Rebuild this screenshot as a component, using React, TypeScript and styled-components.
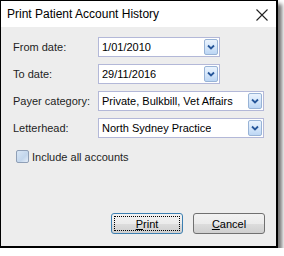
import styled, { createGlobalStyle } from 'styled-components';

const GlobalStyle = createGlobalStyle`
  html, body {
    margin: 0;
    padding: 0;
    background: #ffffff;
  }
  body {
    font-family: 'Liberation Sans', Arial, sans-serif;
    font-size: 11px;
    color: #000;
  }
`;

const Window = styled.div`
  width: 275px;
  height: 245px;
  border: 1px solid #000;
  border-right-width: 2px;
  border-bottom-width: 2px;
  box-shadow: 4px 4px 4px rgba(0, 0, 0, 0.55);
  display: flex;
  flex-direction: column;
  background: #ededed;
`;

const TitleBar = styled.div`
  height: 26px;
  background: #fff;
  display: flex;
  align-items: center;
  justify-content: space-between;
  padding: 0 8px 0 6px;
`;

const TitleText = styled.div`
  font-family: 'Liberation Sans', Arial, sans-serif;
  font-size: 12px;
  color: #000;
`;

const CloseIcon = styled.svg`
  display: block;
  margin-top: 1px;
`;

const Body = styled.div`
  flex: 1;
  display: flex;
  flex-direction: column;
  padding: 10px 11px 12px 12px;
`;

const FormGrid = styled.div`
  display: grid;
  grid-template-columns: 85px 1fr;
  row-gap: 7px;
  align-items: center;
`;

const Label = styled.label`
  font-size: 11px;
  color: #1e1e1e;
`;

const Combo = styled.div<{ $wide?: boolean }>`
  width: ${({ $wide }) => ($wide ? '166px' : '122px')};
  height: 20px;
  box-sizing: border-box;
  border: 1px solid #b3b8d8;
  background: #fff;
  display: flex;
  align-items: center;
  justify-content: space-between;
  padding: 0 1px 0 3px;
`;

const ComboValue = styled.span`
  font-size: 11px;
  color: #000;
  white-space: nowrap;
  overflow: hidden;
`;

const DropButton = styled.div`
  width: 14px;
  height: 16px;
  box-sizing: border-box;
  border: 1px solid #98b3d6;
  border-radius: 2px;
  background: linear-gradient(#eaf3fd 0%, #d6e7fa 50%, #bcd6f4 100%);
  display: flex;
  align-items: center;
  justify-content: center;
`;

const CheckRow = styled.div`
  display: flex;
  align-items: center;
  gap: 3px;
  margin: 12px 0 0 3px;
`;

const CheckBox = styled.div`
  width: 13px;
  height: 13px;
  box-sizing: border-box;
  border: 1px solid #8f9fb6;
  border-radius: 2px;
  background: linear-gradient(135deg, #d8e6f5 0%, #c3d6ec 60%, #e6eef8 100%);
`;

const ButtonRow = styled.div`
  margin-top: auto;
  display: flex;
  justify-content: flex-end;
  gap: 10px;
`;

const Button = styled.div<{ $default?: boolean }>`
  width: 72px;
  height: 21px;
  box-sizing: border-box;
  border: 1px solid ${({ $default }) => ($default ? '#3c7fb1' : '#707070')};
  border-radius: 3px;
  background: linear-gradient(#f2f2f2 0%, #ebebeb 50%, #dddddd 51%, #cfcfcf 100%);
  display: flex;
  align-items: center;
  justify-content: center;
  padding: 2px;
  font-size: 11px;
  color: #000;
`;

const FocusRect = styled.div`
  width: 100%;
  height: 100%;
  box-sizing: border-box;
  border: 1px dotted #000;
  display: flex;
  align-items: center;
  justify-content: center;
`;

const Mnemonic = styled.span`
  text-decoration: underline;
`;

function Chevron() {
  return (
    <svg width="8" height="6" viewBox="0 0 8 6">
      <path d="M1 1.5 L4 4.5 L7 1.5" fill="none" stroke="#27579a" strokeWidth="1.8" />
    </svg>
  );
}

interface ComboFieldProps {
  label: string;
  value: string;
  wide?: boolean;
}

function ComboField({ label, value, wide }: ComboFieldProps) {
  return (
    <>
      <Label>{label}</Label>
      <Combo $wide={wide}>
        <ComboValue>{value}</ComboValue>
        <DropButton>
          <Chevron />
        </DropButton>
      </Combo>
    </>
  );
}

export default function App() {
  return (
    <>
      <GlobalStyle />
      <Window>
        <TitleBar>
          <TitleText>Print Patient Account History</TitleText>
          <CloseIcon width="12" height="12" viewBox="0 0 12 12">
            <path d="M0.5 0.5 L11.5 11.5 M11.5 0.5 L0.5 11.5" stroke="#222" strokeWidth="1.1" />
          </CloseIcon>
        </TitleBar>
        <Body>
          <FormGrid>
            <ComboField label="From date:" value="1/01/2010" />
            <ComboField label="To date:" value="29/11/2016" />
            <ComboField label="Payer category:" value="Private, Bulkbill, Vet Affairs" wide />
            <ComboField label="Letterhead:" value="North Sydney Practice" wide />
          </FormGrid>
          <CheckRow>
            <CheckBox />
            <Label>Include all accounts</Label>
          </CheckRow>
          <ButtonRow>
            <Button $default>
              <FocusRect>
                <span>
                  <Mnemonic>P</Mnemonic>rint
                </span>
              </FocusRect>
            </Button>
            <Button>
              <span>
                <Mnemonic>C</Mnemonic>ancel
              </span>
            </Button>
          </ButtonRow>
        </Body>
      </Window>
    </>
  );
}
